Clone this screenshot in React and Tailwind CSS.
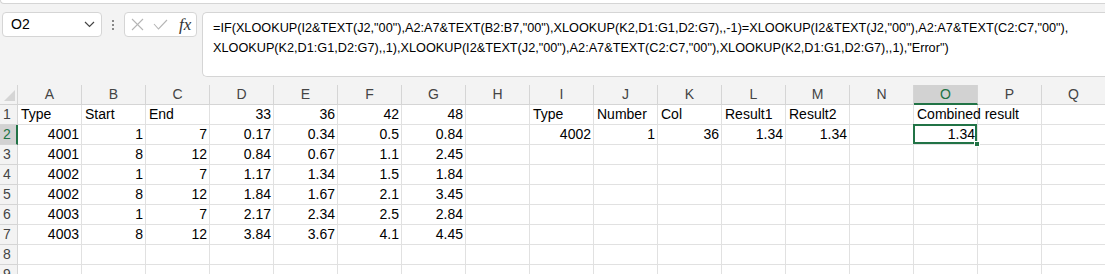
import { useState } from 'react'

const COLS = ['A', 'B', 'C', 'D', 'E', 'F', 'G', 'H', 'I', 'J', 'K', 'L', 'M', 'N', 'O', 'P', 'Q']

// values: string = left aligned text, number = right aligned
const DATA = [
  ['Type', 'Start', 'End', 33, 36, 42, 48, null, 'Type', 'Number', 'Col', 'Result1', 'Result2', null, 'Combined result', null, null],
  [4001, 1, 7, 0.17, 0.34, 0.5, 0.84, null, 4002, 1, 36, 1.34, 1.34, null, 1.34, null, null],
  [4001, 8, 12, 0.84, 0.67, 1.1, 2.45],
  [4002, 1, 7, 1.17, 1.34, 1.5, 1.84],
  [4002, 8, 12, 1.84, 1.67, 2.1, 3.45],
  [4003, 1, 7, 2.17, 2.34, 2.5, 2.84],
  [4003, 8, 12, 3.84, 3.67, 4.1, 4.45],
  [],
  [],
]

function Cell({ value, selected }) {
  const isNum = typeof value === 'number'
  return (
    <div
      className={`relative h-[20px] border-r border-b border-[#e1e1e1] bg-white flex items-end pb-[1px] whitespace-nowrap text-[14px] leading-[17px] text-black ${
        isNum ? 'justify-end pr-[2px]' : 'justify-start pl-[3px]'
      }`}
    >
      {value !== null && value !== undefined && <span className="relative z-10">{value}</span>}
      {selected && (
        <>
          <div className="absolute -left-[1px] -top-[1px] right-0 bottom-0 border-2 border-[#217346] pointer-events-none z-20" />
          <div className="absolute -right-[3px] -bottom-[3px] w-[6px] h-[6px] bg-[#217346] border border-white z-20" />
        </>
      )}
    </div>
  )
}

export default function App() {
  const [selected] = useState({ row: 2, col: 'O' })

  return (
    <div className="w-[1105px] h-[274px] overflow-hidden bg-[#f3f3f3] font-['Liberation_Sans',sans-serif]">
      {/* ribbon edge */}
      <div className="h-[4px] bg-white border-b border-l border-[#d5d5d5] rounded-bl-[4px]" />

      {/* formula bar */}
      <div className="flex items-start pt-[8px] h-[81px]">
        <div className="ml-[2px] w-[100px] h-[25px] bg-white border border-[#d5d5d5] rounded-[4px] flex items-center justify-between pl-[8px] pr-[6px]">
          <span className="text-[14px] text-black">O2</span>
          <svg width="11" height="7" viewBox="0 0 11 7" fill="none" stroke="#444" strokeWidth="1.2">
            <polyline points="1,1 5.5,5.5 10,1" />
          </svg>
        </div>
        <div className="w-[22px] h-[25px] flex flex-col items-center justify-center gap-[2px]">
          <div className="w-[2px] h-[2px] bg-[#888]" />
          <div className="w-[2px] h-[2px] bg-[#888]" />
          <div className="w-[2px] h-[2px] bg-[#888]" />
        </div>
        <div className="w-[73px] h-[25px] bg-white border border-[#d5d5d5] rounded-[4px] flex items-center pl-[6px] gap-[9px]">
          <svg width="13" height="13" viewBox="0 0 13 13" stroke="#b5b5b5" strokeWidth="1.1" fill="none">
            <line x1="1" y1="1" x2="12" y2="12" />
            <line x1="12" y1="1" x2="1" y2="12" />
          </svg>
          <svg width="15" height="11" viewBox="0 0 15 11" stroke="#b5b5b5" strokeWidth="1.1" fill="none">
            <polyline points="1,5 5.5,10 14,1" />
          </svg>
          <span className="font-['Liberation_Serif',serif] italic text-[17px] leading-none text-[#333] ml-[2px]">fx</span>
        </div>
        <div className="ml-[5px] flex-1 h-[65px] bg-white border-t border-b border-l border-[#d5d5d5] rounded-l-[5px] pl-[10px] pt-[5px] text-[12.7px] leading-[20px] text-black whitespace-nowrap">
          =IF(XLOOKUP(I2&amp;TEXT(J2,"00"),A2:A7&amp;TEXT(B2:B7,"00"),XLOOKUP(K2,D1:G1,D2:G7),,-1)=XLOOKUP(I2&amp;TEXT(J2,"00"),A2:A7&amp;TEXT(C2:C7,"00"),
          <br />
          XLOOKUP(K2,D1:G1,D2:G7),,1),XLOOKUP(I2&amp;TEXT(J2,"00"),A2:A7&amp;TEXT(C2:C7,"00"),XLOOKUP(K2,D1:G1,D2:G7),,1),"Error")
        </div>
      </div>

      {/* sheet grid */}
      <div className="grid grid-cols-[18px_repeat(17,64px)] auto-rows-[20px]">
        {/* header row */}
        <div className="h-[20px] bg-[#f3f3f3] border-r border-b border-[#d5d5d5] relative">
          <svg className="absolute left-[4px] bottom-[3px]" width="11" height="11" viewBox="0 0 11 11">
            <polygon points="11,0 11,11 0,11" fill="#d5d5d5" />
          </svg>
        </div>
        {COLS.map((c) => (
          <div
            key={c}
            className={`h-[20px] flex items-center justify-center text-[14px] border-r border-[#d5d5d5] ${
              c === selected.col
                ? 'bg-[#d2d2d2] border-b-2 border-b-[#217346] text-[#217346]'
                : 'bg-[#f3f3f3] border-b text-[#444]'
            }`}
          >
            {c}
          </div>
        ))}

        {DATA.map((row, ri) => {
          const n = ri + 1
          return [
            <div
              key={`h${n}`}
              className={`h-[20px] flex items-center pl-[3px] text-[14px] border-b border-[#d5d5d5] ${
                n === selected.row
                  ? 'bg-[#d2d2d2] border-r-2 border-r-[#217346] text-[#217346]'
                  : 'bg-[#f3f3f3] border-r text-[#444]'
              }`}
            >
              {n}
            </div>,
            ...COLS.map((c, ci) => (
              <Cell key={`${c}${n}`} value={row[ci]} selected={n === selected.row && c === selected.col} />
            )),
          ]
        })}
      </div>
    </div>
  )
}
